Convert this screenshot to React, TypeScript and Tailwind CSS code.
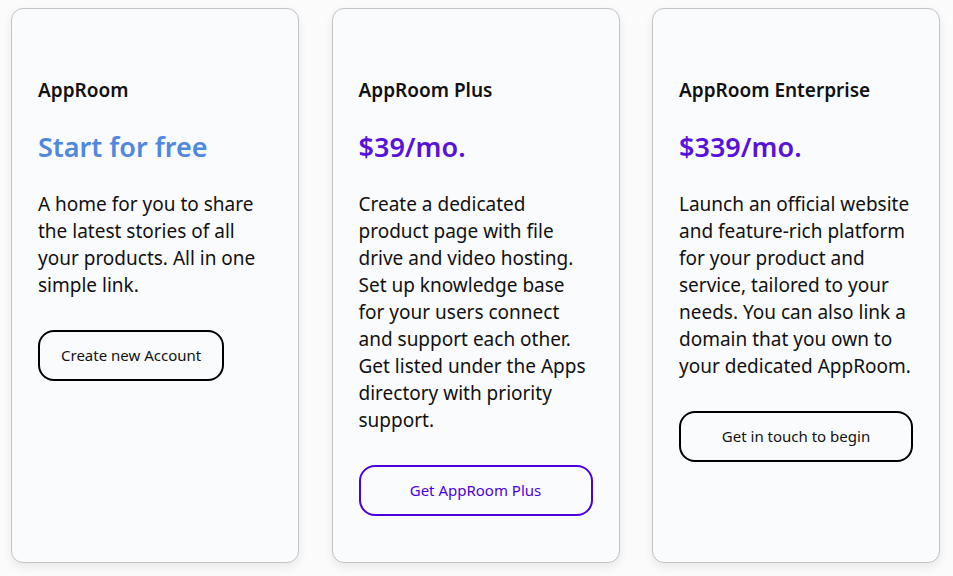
import React from 'react'

interface Plan {
  name: string
  price: string
  priceClass: string
  description: string
  cta: string
  ctaClass: string
}

const PLANS: Plan[] = [
  {
    name: 'AppRoom',
    price: 'Start for free',
    priceClass: 'text-[#4f88de]',
    description: 'A home for you to share the latest stories of all your products. All in one simple link.',
    cta: 'Create new Account',
    ctaClass: 'self-start px-[21px] border-black text-[#111]',
  },
  {
    name: 'AppRoom Plus',
    price: '$39/mo.',
    priceClass: 'text-[#5712dc]',
    description:
      'Create a dedicated product page with file drive and video hosting. Set up knowledge base for your users connect and support each other. Get listed under the Apps directory with priority support.',
    cta: 'Get AppRoom Plus',
    ctaClass: 'w-full border-[#4a00dc] text-[#4a00dc]',
  },
  {
    name: 'AppRoom Enterprise',
    price: '$339/mo.',
    priceClass: 'text-[#5712dc]',
    description:
      'Launch an official website and feature-rich platform for your product and service, tailored to your needs. You can also link a domain that you own to your dedicated AppRoom.',
    cta: 'Get in touch to begin',
    ctaClass: 'w-full border-black text-[#111]',
  },
]

function PlanCard({ plan }: { plan: Plan }) {
  return (
    <div className="w-[288px] h-[555px] shrink-0 rounded-[12px] border border-[#c4c4c8] bg-[#fafbfd] px-[26px] pt-[69px] shadow-[0_4px_10px_rgba(0,0,0,0.08)] flex flex-col">
      <h2 className="text-[19px] leading-[25px] font-semibold text-[#111]">{plan.name}</h2>
      <div className={`mt-[27px] text-[27px] leading-[34px] font-semibold ${plan.priceClass}`}>{plan.price}</div>
      <p className="mt-[27px] text-[19px] leading-[27px] text-[#111]">{plan.description}</p>
      <button className={`mt-[31px] h-[51px] rounded-[16px] border-2 bg-transparent text-[15px] ${plan.ctaClass}`}>
        {plan.cta}
      </button>
    </div>
  )
}

export default function App() {
  return (
    <div
      className="min-h-screen bg-[#fbfbfc] pl-[11px] pt-[8px]"
      style={{ fontFamily: '"Noto Sans", "Open Sans", sans-serif' }}
    >
      <div className="flex gap-[32.5px]">
        {PLANS.map((plan) => (
          <PlanCard key={plan.name} plan={plan} />
        ))}
      </div>
    </div>
  )
}
